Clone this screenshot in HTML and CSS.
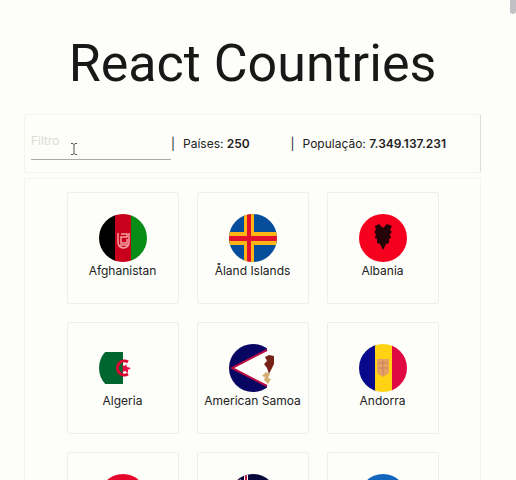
FILE: index.html
```html
<!DOCTYPE html>
<html lang="pt">
<head>
<meta charset="utf-8">
<meta name="viewport" content="width=device-width, initial-scale=1">
<title>React Countries</title>
<link rel="stylesheet" href="styles.css">
</head>
<body>
<main class="page">
  <h1 class="title">React Countries</h1>
  <header class="toolbar">
    <input class="filter" type="text" placeholder="Filtro" aria-label="Filtro">
    <span class="stat countries">|<span class="value">Países: <strong>250</strong></span></span>
    <span class="stat population">|<span class="value">População: <strong>7.349.137.231</strong></span></span>
  </header>
  <section class="countries-list">
    <article class="card">
      <svg class="flag" viewBox="0 0 48 48" aria-hidden="true"><path fill="#000" d="M0 0h17v48H0z"/><path fill="#c9001c" d="M16 0h16v48H16z"/><path fill="#078c16" d="M32 0h16v48H32z"/><path fill="none" stroke="#f3a0a0" stroke-width="1.5" d="M19 19v10q1 5 6 5 5-1 5-6V19M22 20h6v3h-6v6h6v-4M21 31h8"/></svg>
      <span class="name">Afghanistan</span>
    </article>
    <article class="card">
      <svg class="flag" viewBox="0 0 48 48" aria-hidden="true"><path fill="#064d9b" d="M0 0h48v48H0z"/><path fill="#ffb514" d="M15 0h10v48H15zM0 18h48v13H0z"/><path fill="#e1102d" d="M18 0h4v48h-4zM0 22h48v5H0z"/></svg>
      <span class="name">Åland Islands</span>
    </article>
    <article class="card">
      <svg class="flag" viewBox="0 0 48 48" aria-hidden="true"><path fill="#f5001e" d="M0 0h48v48H0z"/><path fill="#240408" d="M16 12l4-2 4 4 4-4 5 2-2 4 2 2-2 2 1 4-2 1v4l-3 1-3 6-3-6-3-1v-4l-2-1 1-4-2-2 2-2z"/></svg>
      <span class="name">Albania</span>
    </article>
    <article class="card">
      <svg class="flag" viewBox="0 0 48 48" aria-hidden="true"><path fill="#00662f" d="M0 8h24v32H0z"/><path fill="none" stroke="#d80a35" stroke-width="3" d="M29 18a7 7 0 1 0 0 12"/><path fill="#e80c42" d="M27 20l1 3 4 1-3 2v3l-3-2-3 1 1-4-1-3 3 1z"/></svg>
      <span class="name">Algeria</span>
    </article>
    <article class="card">
      <svg class="flag" viewBox="0 0 48 48" aria-hidden="true"><path fill="#080663" d="M0 0h38v48H0z"/><path fill="#fefefb" d="M38 0h10v48H38z"/><path fill="#fefefb" stroke="#b90b42" stroke-width="2" d="M38 6L3 24l35 18"/><path fill="#762316" d="M36 13l4-2 5 1v8l-3 6-2 4-2-6-3-4 3-3z"/><path fill="#d6ad72" d="M37 28l4 2-2 4 3 1-3 5-4-4 1-3-3-1z"/></svg>
      <span class="name">American Samoa</span>
    </article>
    <article class="card">
      <svg class="flag" viewBox="0 0 48 48" aria-hidden="true"><path fill="#09098c" d="M0 0h17v48H0z"/><path fill="#ffd313" d="M16 0h17v48H16z"/><path fill="#df0a42" d="M33 0h15v48H33z"/><path fill="#e6a160" d="M18 15h12v14l-6 4-6-4z"/><path fill="none" stroke="#c98065" d="M19 19h10M19 24h10M24 16v15"/></svg>
      <span class="name">Andorra</span>
    </article>
    <article class="card">
      <svg class="flag" viewBox="0 0 48 48" aria-hidden="true"><path fill="#e5062c" d="M0 0h48v24H0z"/><path d="M0 24h48v24H0z"/></svg>
    </article>
    <article class="card">
      <svg class="flag" viewBox="0 0 48 48" aria-hidden="true"><path fill="#07093c" d="M0 0h48v48H0z"/><path stroke="#fff" stroke-width="4" d="M10 7l13 8M17 0v20"/><path stroke="#bd1743" stroke-width="2" d="M9 6l13 8M17 0v20"/></svg>
    </article>
    <article class="card">
      <svg class="flag" viewBox="0 0 48 48" aria-hidden="true"><path fill="#1266bd" d="M0 0h48v48H0z"/></svg>
    </article>
  </section>
</main>
<div class="scroll-thumb"></div>
<svg class="pointer" viewBox="0 0 8 12" aria-hidden="true"><path fill="none" stroke="#555" d="M1 .5h2l1 1 1-1h2M4 1v10M1 11.5h2l1-1 1 1h2"/></svg>
</body>
</html>
```
FILE: styles.css
```css
* {
  box-sizing: border-box;
}

html {
  height: 100%;
  overflow: hidden;
  background: #fdfdfa;
}

body {
  margin: 0;
  color: #222;
  font: 12px/18px Inter, "Liberation Sans", sans-serif;
}

.page {
  padding: 24px 35px 24px 24px;
}

.title {
  margin: 0 0 10px;
  color: #181818;
  font-family: Roboto, "Liberation Sans", sans-serif;
  font-size: 52px;
  font-weight: 400;
  line-height: 80px;
  text-align: center;
  white-space: nowrap;
}

.toolbar {
  display: flex;
  align-items: center;
  height: 59px;
  margin-bottom: 5px;
  padding: 0 6px;
  border: 1px solid #f5f5f0;
  border-right-color: #dcdcd8;
  border-radius: 2px;
}

.filter {
  width: 140px;
  height: 32px;
  padding: 0 0 6px;
  border: 0;
  border-bottom: 1px solid #aaa;
  outline: 0;
  background: transparent;
  color: #222;
  font: inherit;
}

.filter::placeholder {
  color: #dcdcd2;
  opacity: 1;
}

.stat {
  display: flex;
  gap: 8px;
  white-space: nowrap;
}

.countries {
  flex: 1;
}

.population {
  margin-right: 28px;
}

strong {
  font-weight: 600;
}

.countries-list {
  display: grid;
  grid-template-columns: repeat(3, 112px);
  justify-content: center;
  gap: 18px;
  padding: 13px 0;
  border: 1px solid #f5f5f0;
}

.card {
  display: flex;
  flex-direction: column;
  align-items: center;
  height: 112px;
  padding-top: 21px;
  border: 1px solid #efefea;
  border-radius: 2px;
}

.flag {
  width: 48px;
  height: 48px;
  border-radius: 50%;
}

.name {
  white-space: nowrap;
}

.scroll-thumb {
  position: absolute;
  top: 0;
  right: 0;
  width: 6px;
  height: 14px;
  border-radius: 0 0 3px 3px;
  background: #c1c1c5;
}

.pointer {
  position: absolute;
  top: 143px;
  left: 70px;
  width: 8px;
  height: 12px;
}
```
